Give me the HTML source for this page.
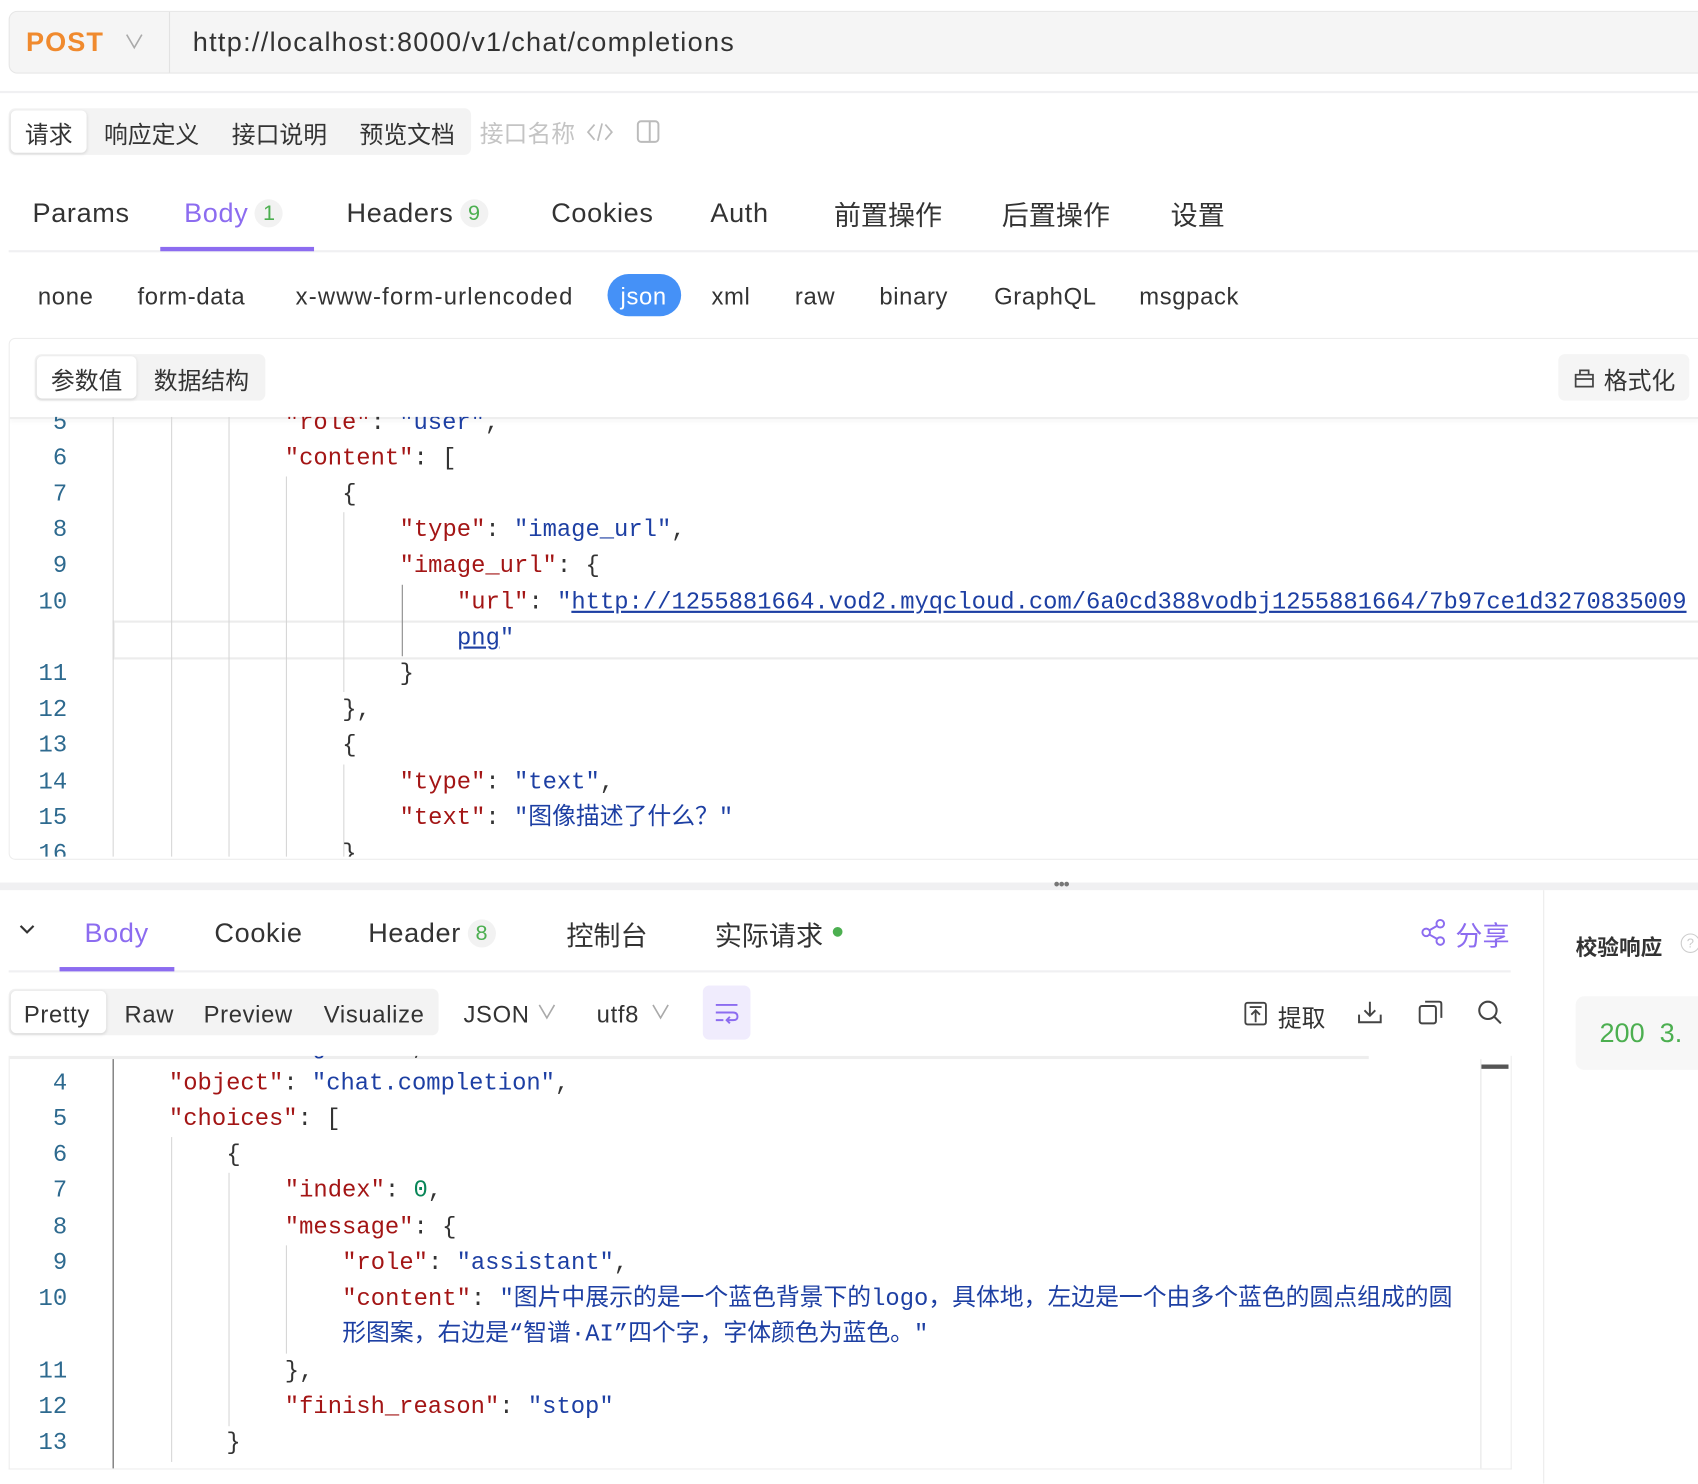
<!DOCTYPE html>
<html><head><meta charset="utf-8"><style>
html,body{margin:0;padding:0;background:#fff;width:1698px;height:1484px;overflow:hidden}
.s{position:absolute;left:0;top:0;width:1568px;height:1370px;transform:scale(1.08291);transform-origin:0 0;font-family:"Liberation Sans","Noto Sans CJK SC",sans-serif;color:#333}
.a{position:absolute;white-space:nowrap}
.ls{letter-spacing:0.6px}
.mono{font-family:"Liberation Mono","Noto Sans CJK SC",monospace;font-size:22px}
.k{color:#a31515}.v{color:#1d3fa3}.n{color:#098658}.u{color:#1d3fa3;text-decoration:underline}
.ln{position:absolute;width:62px;text-align:right;color:#2e6a8f;font-family:"Liberation Mono",monospace;font-size:22px;line-height:33px}
.cl{position:absolute;line-height:33px;height:33px;white-space:nowrap}
.g{position:absolute;width:1px;background:#d6d6d6}
.badge{display:inline-block;width:26px;height:26px;border-radius:13px;background:#f2f2f2;color:#4caf50;font-size:20px;text-align:center;line-height:26px;vertical-align:2px;margin-left:6px;letter-spacing:0}
</style></head><body><div class="s">

<!-- URL bar -->
<div class="a" style="left:8px;top:10px;width:1580px;height:56px;background:#f5f5f5;border:1px solid #e6e6e6;border-radius:8px"></div>
<div class="a" style="left:24px;top:25px;font-size:25px;font-weight:bold;color:#f08a2e;letter-spacing:1px">POST</div>
<svg class="a" style="left:114px;top:30px" width="20" height="16"><path d="M3 2 L10 14 L17 2" fill="none" stroke="#aaa" stroke-width="1.5"/></svg>
<div class="a" style="left:156px;top:11px;width:1px;height:56px;background:#e2e2e2"></div>
<div class="a" style="left:178px;top:25px;font-size:25px;color:#333;letter-spacing:1.2px">http://localhost:8000/v1/chat/completions</div>
<div class="a" style="left:0;top:84px;width:1568px;height:2px;background:#f0f0f2"></div>

<!-- segmented tabs -->
<div class="a" style="left:8px;top:100px;width:427px;height:43px;background:#f3f3f3;border-radius:6px"></div>
<div class="a" style="left:10px;top:102px;width:70px;height:39px;background:#fff;border-radius:5px;box-shadow:0 1px 3px rgba(0,0,0,.12)"></div>
<div class="a" style="left:23px;top:107px;font-size:22px;color:#333">请求</div>
<div class="a" style="left:96px;top:107px;font-size:22px;color:#333">响应定义</div>
<div class="a" style="left:214px;top:107px;font-size:22px;color:#333">接口说明</div>
<div class="a" style="left:332px;top:107px;font-size:22px;color:#333">预览文档</div>
<div class="a" style="left:443px;top:106px;font-size:22px;color:#c4c4c4">接口名称</div>
<svg class="a" style="left:541px;top:111px" width="26" height="22"><path d="M8 4 L2 11 L8 18 M18 4 L24 11 L18 18 M15 3 L11 19" fill="none" stroke="#bbb" stroke-width="1.6"/></svg>
<svg class="a" style="left:587px;top:110px" width="24" height="24"><rect x="2" y="2" width="19" height="19" rx="3" fill="none" stroke="#bbb" stroke-width="1.8"/><path d="M13 2 V21" stroke="#bbb" stroke-width="1.8"/></svg>

<!-- main tabs -->
<div class="a ls" style="left:30px;top:183px;font-size:25px">Params</div>
<div class="a ls" style="left:170px;top:183px;font-size:25px;color:#8c6cf0">Body<span class="badge">1</span></div>
<div class="a ls" style="left:320px;top:183px;font-size:25px">Headers<span class="badge">9</span></div>
<div class="a ls" style="left:509px;top:183px;font-size:25px">Cookies</div>
<div class="a ls" style="left:656px;top:183px;font-size:25px">Auth</div>
<div class="a" style="left:770px;top:180px;font-size:25px">前置操作</div>
<div class="a" style="left:925px;top:180px;font-size:25px">后置操作</div>
<div class="a" style="left:1081px;top:180px;font-size:25px">设置</div>
<div class="a" style="left:8px;top:231px;width:1560px;height:2px;background:#f0f0f2"></div>
<div class="a" style="left:148px;top:228px;width:142px;height:4px;background:#8c6cf0"></div>

<!-- body types -->
<div class="a ls" style="left:35px;top:261px;font-size:22px">none</div>
<div class="a ls" style="left:127px;top:261px;font-size:22px">form-data</div>
<div class="a" style="left:273px;top:261px;font-size:22px;letter-spacing:1.1px">x-www-form-urlencoded</div>
<div class="a" style="left:561px;top:253px;width:68px;height:39px;border-radius:20px;background:#4591f7"></div>
<div class="a ls" style="left:573px;top:261px;font-size:22px;color:#fff">json</div>
<div class="a ls" style="left:657px;top:261px;font-size:22px">xml</div>
<div class="a ls" style="left:734px;top:261px;font-size:22px">raw</div>
<div class="a ls" style="left:812px;top:261px;font-size:22px">binary</div>
<div class="a ls" style="left:918px;top:261px;font-size:22px">GraphQL</div>
<div class="a ls" style="left:1052px;top:261px;font-size:22px">msgpack</div>

<!-- editor panel -->
<div class="a" style="left:8px;top:312px;width:1580px;height:480px;border:1px solid #ededed;border-radius:6px"></div>
<div class="a" style="left:32px;top:327px;width:213px;height:43px;background:#f3f3f3;border-radius:6px"></div>
<div class="a" style="left:34px;top:329px;width:92px;height:39px;background:#fff;border-radius:5px;box-shadow:0 1px 3px rgba(0,0,0,.12)"></div>
<div class="a" style="left:47px;top:334px;font-size:22px">参数值</div>
<div class="a" style="left:142px;top:334px;font-size:22px">数据结构</div>
<div class="a" style="left:1439px;top:327px;width:121px;height:43px;background:#f5f5f5;border-radius:6px"></div>
<svg class="a" style="left:1452px;top:338px" width="22" height="22"><path d="M3 8 H19 V19 H3 Z M3 12 H19 M7 8 V4 H15 V8" fill="none" stroke="#444" stroke-width="1.6"/></svg>
<div class="a" style="left:1481px;top:334px;font-size:22px">格式化</div>

<div class="a" style="left:9px;top:385px;width:1559px;height:406px;overflow:hidden">
 <div style="position:absolute;left:-9px;top:-385px;width:1570px;height:1200px">
  <div class="a" style="left:9px;top:385px;width:1560px;height:2px;background:#eee;box-shadow:0 2px 4px rgba(0,0,0,.06)"></div>
  <div class="a" style="left:104px;top:573px;width:1470px;height:32px;border:2px solid #ececec;border-right:none"></div>
  <div class="g" style="left:104px;top:385px;height:410px"></div>
  <div class="g" style="left:158px;top:385px;height:410px"></div>
  <div class="g" style="left:211px;top:385px;height:410px"></div>
  <div class="g" style="left:264px;top:440px;height:355px"></div>
  <div class="g" style="left:317px;top:473px;height:166px"></div>
  <div class="g" style="left:317px;top:706px;height:90px"></div>
  <div class="g" style="left:371px;top:540px;height:66px;background:#888"></div>
  <div class="ln" style="top:374px">5</div>
  <div class="ln" style="top:407px">6</div>
  <div class="ln" style="top:440px">7</div>
  <div class="ln" style="top:473px">8</div>
  <div class="ln" style="top:506px">9</div>
  <div class="ln" style="top:540px">10</div>
  <div class="ln" style="top:606px">11</div>
  <div class="ln" style="top:639px">12</div>
  <div class="ln" style="top:672px">13</div>
  <div class="ln" style="top:706px">14</div>
  <div class="ln" style="top:739px">15</div>
  <div class="ln" style="top:772px">16</div>
  <div class="cl mono" style="left:263px;top:374px"><span class="k">"role"</span>: <span class="v">"user"</span>,</div>
  <div class="cl mono" style="left:263px;top:407px"><span class="k">"content"</span>: [</div>
  <div class="cl mono" style="left:316px;top:440px">{</div>
  <div class="cl mono" style="left:369px;top:473px"><span class="k">"type"</span>: <span class="v">"image_url"</span>,</div>
  <div class="cl mono" style="left:369px;top:506px"><span class="k">"image_url"</span>: {</div>
  <div class="cl mono" style="left:422px;top:540px"><span class="k">"url"</span>: <span class="v">"</span><span class="u">http://1255881664.vod2.myqcloud.com/6a0cd388vodbj1255881664/7b97ce1d3270835009</span></div>
  <div class="cl mono" style="left:422px;top:573px"><span class="u">png</span><span class="v">"</span></div>
  <div class="cl mono" style="left:369px;top:606px">}</div>
  <div class="cl mono" style="left:316px;top:639px">},</div>
  <div class="cl mono" style="left:316px;top:672px">{</div>
  <div class="cl mono" style="left:369px;top:706px"><span class="k">"type"</span>: <span class="v">"text"</span>,</div>
  <div class="cl mono" style="left:369px;top:739px"><span class="k">"text"</span>: <span class="v">"图像描述了什么？"</span></div>
  <div class="cl mono" style="left:316px;top:772px">}</div>
 </div>
</div>

<!-- divider -->
<div class="a" style="left:0;top:815px;width:1568px;height:7px;background:#f0f0f2"></div>
<div class="a" style="left:973px;top:809px;font-size:16px;color:#777;letter-spacing:-1px">•••</div>
<div class="a" style="left:1425px;top:822px;width:1px;height:548px;background:#ececec"></div>

<!-- response tabs -->
<svg class="a" style="left:16px;top:851px" width="18" height="14"><path d="M3 4 L9 10 L15 4" fill="none" stroke="#333" stroke-width="2"/></svg>
<div class="a ls" style="left:78px;top:848px;font-size:25px;color:#8c6cf0">Body</div>
<div class="a ls" style="left:198px;top:848px;font-size:25px">Cookie</div>
<div class="a ls" style="left:340px;top:848px;font-size:25px">Header<span class="badge">8</span></div>
<div class="a" style="left:523px;top:845px;font-size:25px">控制台</div>
<div class="a" style="left:660px;top:845px;font-size:25px">实际请求</div>
<div class="a" style="left:769px;top:856px;width:9px;height:9px;border-radius:5px;background:#4caf50"></div>
<svg class="a" style="left:1312px;top:848px" width="24" height="26"><circle cx="18" cy="5" r="3.5" fill="none" stroke="#8c6cf0" stroke-width="1.8"/><circle cx="5" cy="13" r="3.5" fill="none" stroke="#8c6cf0" stroke-width="1.8"/><circle cx="18" cy="21" r="3.5" fill="none" stroke="#8c6cf0" stroke-width="1.8"/><path d="M8 11 L15 7 M8 15 L15 19" stroke="#8c6cf0" stroke-width="1.8"/></svg>
<div class="a" style="left:1344px;top:845px;font-size:25px;color:#8c6cf0">分享</div>
<div class="a" style="left:8px;top:896px;width:1387px;height:2px;background:#f0f0f2"></div>
<div class="a" style="left:55px;top:893px;width:106px;height:4px;background:#8c6cf0"></div>

<!-- response toolbar -->
<div class="a" style="left:8px;top:913px;width:397px;height:43px;background:#f3f3f3;border-radius:6px"></div>
<div class="a" style="left:10px;top:915px;width:88px;height:39px;background:#fff;border-radius:5px;box-shadow:0 1px 3px rgba(0,0,0,.12)"></div>
<div class="a ls" style="left:22px;top:924px;font-size:22px">Pretty</div>
<div class="a ls" style="left:115px;top:924px;font-size:22px">Raw</div>
<div class="a ls" style="left:188px;top:924px;font-size:22px">Preview</div>
<div class="a ls" style="left:299px;top:924px;font-size:22px">Visualize</div>
<div class="a ls" style="left:428px;top:924px;font-size:22px">JSON</div>
<svg class="a" style="left:495px;top:926px" width="20" height="16"><path d="M3 2 L10 14 L17 2" fill="none" stroke="#aaa" stroke-width="1.5"/></svg>
<div class="a ls" style="left:551px;top:924px;font-size:22px">utf8</div>
<svg class="a" style="left:600px;top:926px" width="20" height="16"><path d="M3 2 L10 14 L17 2" fill="none" stroke="#aaa" stroke-width="1.5"/></svg>
<div class="a" style="left:649px;top:910px;width:44px;height:50px;background:#f0ecfd;border-radius:6px"></div>
<svg class="a" style="left:659px;top:924px" width="24" height="22"><path d="M2 4 H22 M2 11 H18 Q22 11 22 15 Q22 18 18 18 H13 M15 15 L12 18 L15 21 M2 18 H9" fill="none" stroke="#8c6cf0" stroke-width="1.8"/></svg>
<svg class="a" style="left:1148px;top:924px" width="24" height="24"><rect x="2" y="2" width="19" height="20" rx="2" fill="none" stroke="#444" stroke-width="1.7"/><path d="M6 6 H17 M11.5 20 V10 M7.5 13 L11.5 9 L15.5 13" fill="none" stroke="#444" stroke-width="1.7"/></svg>
<div class="a" style="left:1180px;top:923px;font-size:22px">提取</div>
<svg class="a" style="left:1252px;top:922px" width="26" height="26"><path d="M13 3 V16 M8 11 L13 16 L18 11 M3 15 V22 H23 V15" fill="none" stroke="#444" stroke-width="1.8"/></svg>
<svg class="a" style="left:1308px;top:922px" width="26" height="26"><rect x="3" y="7" width="15" height="16" rx="2" fill="none" stroke="#444" stroke-width="1.8"/><path d="M8 3 H21 Q23 3 23 5 V18" fill="none" stroke="#444" stroke-width="1.8"/></svg>
<svg class="a" style="left:1363px;top:922px" width="26" height="26"><circle cx="11" cy="11" r="8" fill="none" stroke="#444" stroke-width="1.9"/><path d="M17 17 L23 23" stroke="#444" stroke-width="1.9"/></svg>

<!-- response code -->
<div class="a" style="left:8px;top:975px;width:1386px;height:381px;border:1px solid #ededed;border-top:none;overflow:hidden">
 <div style="position:absolute;left:-9px;top:-975px;width:1400px;height:1400px">
  <div class="a" style="left:9px;top:975px;width:1255px;height:3px;background:#eee"></div>
  <div class="a" style="left:1367px;top:978px;width:1px;height:380px;background:#e6e6e6"></div>
  <div class="a" style="left:1368px;top:983px;width:25px;height:4px;background:#555"></div>
  <div class="g" style="left:104px;top:978px;height:380px;background:#555"></div>
  <div class="g" style="left:158px;top:1050px;height:300px"></div>
  <div class="g" style="left:211px;top:1083px;height:234px"></div>
  <div class="g" style="left:264px;top:1150px;height:100px"></div>
  <div class="ln" style="top:984px">4</div>
  <div class="ln" style="top:1017px">5</div>
  <div class="ln" style="top:1050px">6</div>
  <div class="ln" style="top:1083px">7</div>
  <div class="ln" style="top:1117px">8</div>
  <div class="ln" style="top:1150px">9</div>
  <div class="ln" style="top:1183px">10</div>
  <div class="ln" style="top:1250px">11</div>
  <div class="ln" style="top:1283px">12</div>
  <div class="ln" style="top:1316px">13</div>
  <div class="cl mono" style="left:156px;top:951px"><span class="k">"model"</span>: <span class="v">"glm-4v"</span>,</div>
  <div class="cl mono" style="left:156px;top:984px"><span class="k">"object"</span>: <span class="v">"chat.completion"</span>,</div>
  <div class="cl mono" style="left:156px;top:1017px"><span class="k">"choices"</span>: [</div>
  <div class="cl mono" style="left:209px;top:1050px">{</div>
  <div class="cl mono" style="left:263px;top:1083px"><span class="k">"index"</span>: <span class="n">0</span>,</div>
  <div class="cl mono" style="left:263px;top:1117px"><span class="k">"message"</span>: {</div>
  <div class="cl mono" style="left:316px;top:1150px"><span class="k">"role"</span>: <span class="v">"assistant"</span>,</div>
  <div class="cl mono" style="left:316px;top:1183px"><span class="k">"content"</span>: <span class="v">"图片中展示的是一个蓝色背景下的logo，具体地，左边是一个由多个蓝色的圆点组成的圆</span></div>
  <div class="cl mono" style="left:316px;top:1216px"><span class="v">形图案，右边是“智谱·AI”四个字，字体颜色为蓝色。"</span></div>
  <div class="cl mono" style="left:263px;top:1250px">},</div>
  <div class="cl mono" style="left:263px;top:1283px"><span class="k">"finish_reason"</span>: <span class="v">"stop"</span></div>
  <div class="cl mono" style="left:209px;top:1316px">}</div>
 </div>
</div>

<!-- right panel -->
<div class="a" style="left:1455px;top:859px;font-size:20px;font-weight:bold;color:#333">校验响应</div>
<div class="a" style="left:1552px;top:862px;width:16px;height:16px;border:1.5px solid #ccc;border-radius:10px;font-size:12px;color:#ccc;text-align:center;line-height:16px">?</div>
<div class="a" style="left:1455px;top:920px;width:130px;height:68px;background:#f7f7f7;border-radius:8px"></div>
<div class="a" style="left:1477px;top:940px;font-size:25px;color:#4caf50">200 &nbsp;3.</div>

</div></body></html>
